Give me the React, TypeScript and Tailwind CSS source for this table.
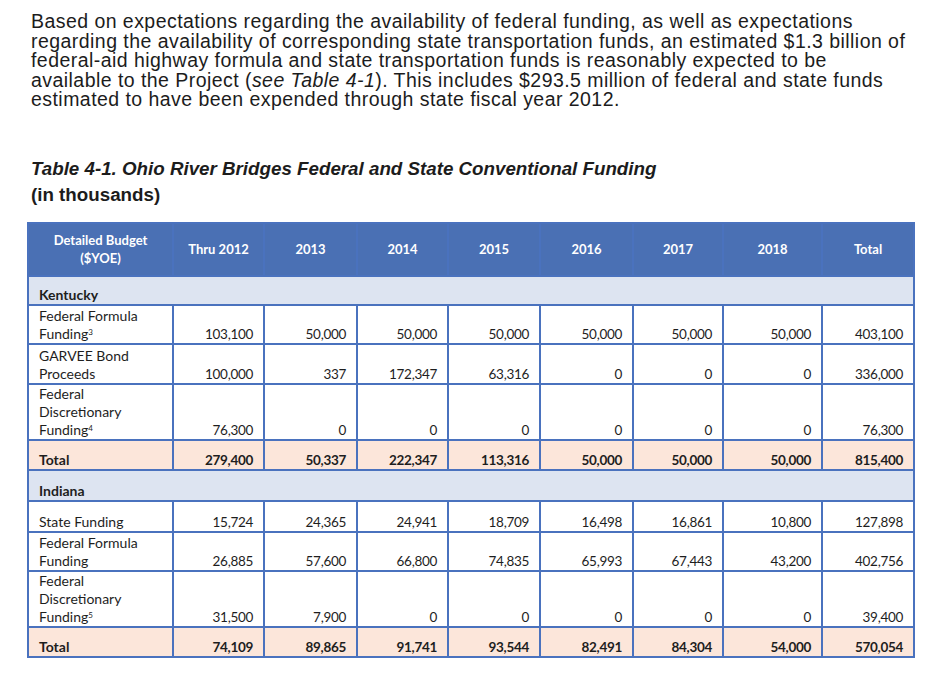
import React from "react";

type Row = {
  label: React.ReactNode;
  values: string[];
  h: string;
  total?: boolean;
};

const years = ["Thru 2012", "2013", "2014", "2015", "2016", "2017", "2018", "Total"];

const colWidths = ["w-[145px]", "w-[91px]", "w-[93px]", "w-[91px]", "w-[92px]", "w-[93px]", "w-[90px]", "w-[99px]", "w-[92px]"];

const kentucky: Row[] = [
  {
    label: (
      <>
        Federal Formula
        <br />
        Funding<sup className="text-[8px]">3</sup>
      </>
    ),
    values: ["103,100", "50,000", "50,000", "50,000", "50,000", "50,000", "50,000", "403,100"],
    h: "h-[39px]",
  },
  {
    label: (
      <>
        GARVEE Bond
        <br />
        Proceeds
      </>
    ),
    values: ["100,000", "337", "172,347", "63,316", "0", "0", "0", "336,000"],
    h: "h-[40px]",
  },
  {
    label: (
      <>
        Federal
        <br />
        Discretionary
        <br />
        Funding<sup className="text-[8px]">4</sup>
      </>
    ),
    values: ["76,300", "0", "0", "0", "0", "0", "0", "76,300"],
    h: "h-[56px]",
  },
  {
    label: "Total",
    values: ["279,400", "50,337", "222,347", "113,316", "50,000", "50,000", "50,000", "815,400"],
    h: "h-[30px]",
    total: true,
  },
];

const indiana: Row[] = [
  {
    label: "State Funding",
    values: ["15,724", "24,365", "24,941", "18,709", "16,498", "16,861", "10,800", "127,898"],
    h: "h-[31px]",
  },
  {
    label: (
      <>
        Federal Formula
        <br />
        Funding
      </>
    ),
    values: ["26,885", "57,600", "66,800", "74,835", "65,993", "67,443", "43,200", "402,756"],
    h: "h-[39px]",
  },
  {
    label: (
      <>
        Federal
        <br />
        Discretionary
        <br />
        Funding<sup className="text-[8px]">5</sup>
      </>
    ),
    values: ["31,500", "7,900", "0", "0", "0", "0", "0", "39,400"],
    h: "h-[56px]",
  },
  {
    label: "Total",
    values: ["74,109", "89,865", "91,741", "93,544", "82,491", "84,304", "54,000", "570,054"],
    h: "h-[30px]",
    total: true,
  },
];

function SectionRow({ name, h }: { name: string; h: string }) {
  return (
    <tr className={`${h} bg-[#dde4f1]`}>
      <td colSpan={9} className="border-2 border-[#4a72be] px-[10px] align-bottom font-bold">
        {name}
      </td>
    </tr>
  );
}

function DataRow({ row }: { row: Row }) {
  const bg = row.total ? "bg-[#fce6da]" : "bg-white";
  return (
    <tr className={`${row.h} ${bg}`}>
      <td className={`border-2 border-[#4a72be] pl-[10px] align-bottom ${row.total ? "font-bold" : ""}`}>
        {row.label}
      </td>
      {row.values.map((v, i) => (
        <td
          key={i}
          className={`border-2 border-[#4a72be] pr-[10px] text-right align-bottom text-[13.5px] tracking-[-0.3px] ${row.total ? "font-bold" : ""}`}
        >
          {v}
        </td>
      ))}
    </tr>
  );
}

export default function App() {
  return (
    <div className="w-[941px] h-[696px] bg-white overflow-hidden text-[#1c1c1c]">
      <p className="pl-[31px] pt-[12px] font-['Liberation_Sans',Arial,sans-serif] text-[19.5px] leading-[19.5px] tracking-[0.45px] whitespace-nowrap">
        Based on expectations regarding the availability of federal funding, as well as expectations
        <br />
        regarding the availability of corresponding state transportation funds, an estimated $1.3 billion of
        <br />
        federal-aid highway formula and state transportation funds is reasonably expected to be
        <br />
        available to the Project (<i>see Table 4-1</i>). This includes $293.5 million of federal and state funds
        <br />
        estimated to have been expended through state fiscal year 2012.
      </p>

      <div className="pl-[31px] pt-[46px] font-['Liberation_Sans',Arial,sans-serif] font-bold text-[18.75px] leading-[26px]">
        <div className="italic">Table 4-1. Ohio River Bridges Federal and State Conventional Funding</div>
        <div>(in thousands)</div>
      </div>

      <div className="pl-[27px] pt-[14px]">
        <table className="table-fixed border-collapse w-[886px] font-['Lato',sans-serif] text-[14px] leading-[18px] text-[#1e1e1e]">
          <colgroup>
            {colWidths.map((w, i) => (
              <col key={i} className={w} />
            ))}
          </colgroup>
          <thead>
            <tr className="h-[53px] bg-[#4a70b4] text-white font-bold text-[13px] leading-[18px]">
              <th className="border-2 border-[#4a72be] text-center align-middle font-bold">
                Detailed Budget
                <br />
                ($YOE)
              </th>
              {years.map((y) => (
                <th key={y} className="border-2 border-[#4a72be] text-center align-middle font-bold">
                  {y}
                </th>
              ))}
            </tr>
          </thead>
          <tbody>
            <SectionRow name="Kentucky" h="h-[29px]" />
            {kentucky.map((r, i) => (
              <DataRow key={i} row={r} />
            ))}
            <SectionRow name="Indiana" h="h-[31px]" />
            {indiana.map((r, i) => (
              <DataRow key={i} row={r} />
            ))}
          </tbody>
        </table>
      </div>
    </div>
  );
}
